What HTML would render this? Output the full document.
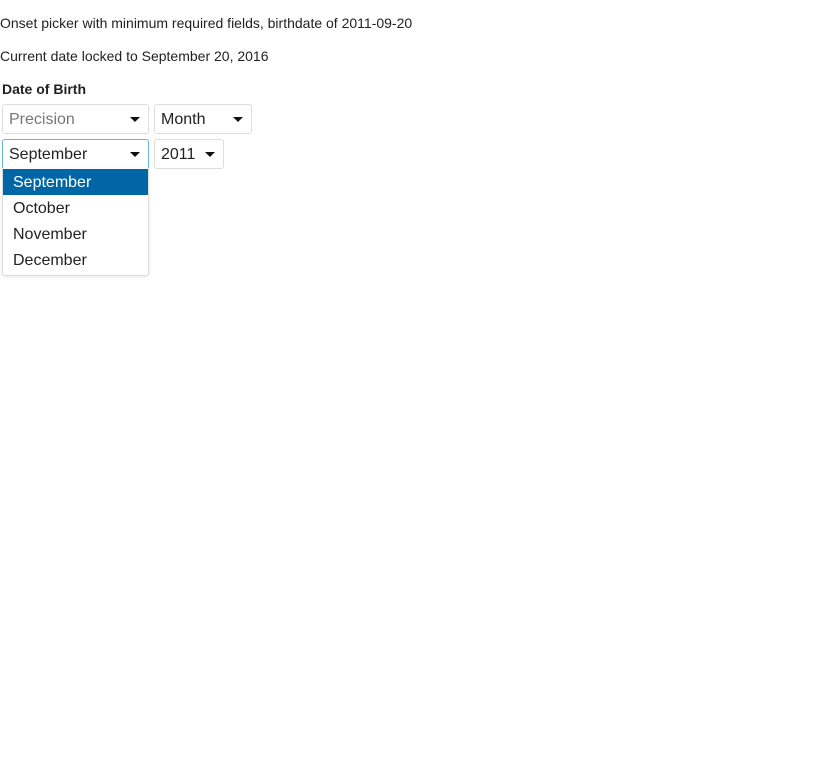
<!DOCTYPE html>
<html><head><style>
body{margin:0;font-family:"Liberation Sans",sans-serif;color:#222;background:#fff;}
.t{position:absolute;left:0;font-size:14px;}
.box{position:absolute;box-sizing:border-box;border:1px solid #ddd;border-radius:3px;height:30px;font-size:16px;line-height:30px;padding-left:6px;background:#fff;}
.car{position:absolute;top:12px;width:0;height:0;border-left:5px solid transparent;border-right:5px solid transparent;border-top:5px solid #111;}
.menu{position:absolute;left:2px;top:168px;width:147px;height:108px;box-sizing:border-box;padding-top:1px;border:1px solid #ddd;border-top:none;border-radius:0 0 3px 3px;box-shadow:0 1px 3px rgba(0,0,0,.1);background:#fff;}
.it{height:26px;line-height:27px;padding-left:10px;font-size:16px;overflow:hidden;}
</style></head><body>
<div class="t" style="top:15px">Onset picker with minimum required fields, birthdate of 2011-09-20</div>
<div class="t" style="top:48px">Current date locked to September 20, 2016</div>
<div class="t" style="top:81px;left:2px;font-weight:bold">Date of Birth</div>
<div class="box" style="left:2px;top:104px;width:147px;color:#777">Precision<div class="car" style="left:127px"></div></div>
<div class="box" style="left:154px;top:104px;width:98px">Month<div class="car" style="left:78px"></div></div>
<div class="box" style="left:2px;top:139px;width:147px;border-color:#66b3e0;border-radius:3px 3px 0 0">September<div class="car" style="left:127px"></div></div>
<div class="box" style="left:154px;top:139px;width:70px">2011<div class="car" style="left:50px"></div></div>
<div class="menu">
<div class="it" style="background:#0066a6;color:#fff">September</div>
<div class="it">October</div>
<div class="it">November</div>
<div class="it">December</div>
</div>
</body></html>
